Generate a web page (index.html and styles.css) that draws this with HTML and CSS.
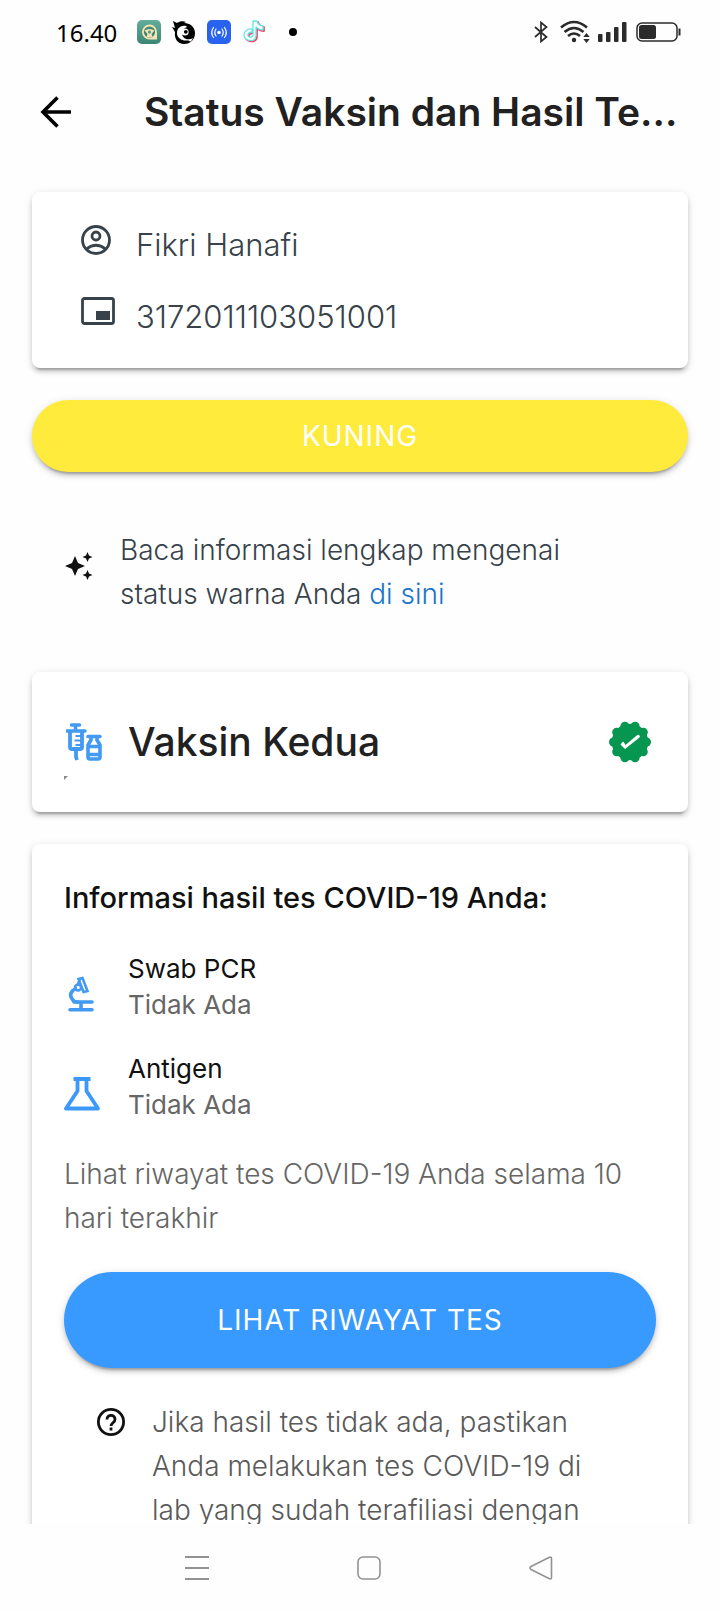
FILE: index.html
```html
<!DOCTYPE html>
<html lang="id">
<head>
<meta charset="utf-8">
<meta name="viewport" content="width=device-width, initial-scale=1">
<title>Status Vaksin dan Hasil Tes</title>
<link rel="stylesheet" href="styles.css">
</head>
<body>
<div class="statusbar">
  <span class="clock">16.40</span>
  <div class="notifications">
    <svg width="24" height="24" viewBox="0 0 24 24" aria-hidden="true">
      <defs><linearGradient id="g" x1="0" y1="0" x2="0" y2="1"><stop offset="0" stop-color="#62ad9c"/><stop offset="1" stop-color="#3b8573"/></linearGradient></defs>
      <rect width="24" height="24" rx="5" fill="url(#g)"/>
      <path d="M5 12a7.500 7.500 0 1 1 15 0v7.500h-7.500A7.500 7.500 0 0 1 5 12z" fill="#f3e2b4"/>
      <circle cx="12.500" cy="12" r="5.600" fill="#3f8674"/>
      <path d="M7.500 10.500q5-3 10 0l-3 3.500 1 3h-6l1-3z" fill="#f3e2b4"/>
      <circle cx="12.500" cy="12" r="1.500" fill="#4b9382"/>
    </svg>
    <svg width="24" height="24" viewBox="0 0 24 24" aria-hidden="true">
      <path d="M1 1l4 2c3-2 6-2 9-1l-2 1c6 0 11 4 11 10 0 6-4 11-11 11C6 24 2 19 3 12L0 7l3 1z" fill="#000"/>
      <path d="M14 6C9 5 5 8 5 13c0 6 7 9 12 7-4-1-7-3-7-7 0-3 2-5 5-6z" fill="#fff"/>
      <circle cx="13" cy="12" r="3.600" fill="#fff"/><circle cx="13.800" cy="11.800" r="1.900" fill="#000"/>
      <path d="M15 19q3 1 6-1l-2 3.500q-2 0-4-2.500z" fill="#fff"/>
    </svg>
    <svg width="24" height="24" viewBox="0 0 24 24" aria-hidden="true">
      <rect width="24" height="24" rx="5" fill="#2763ee"/>
      <circle cx="12" cy="12.500" r="1.800" fill="#fff"/>
      <path d="M9 9q-2.500 3.500 0 7M15 9q2.500 3.500 0 7M6.500 7.500q-3.600 5 0 10M17.500 7.500q3.600 5 0 10" fill="none" stroke="#fff" stroke-width="1.200" stroke-linecap="round"/>
    </svg>
    <svg width="24" height="24" viewBox="0 0 24 24" fill="none" stroke-linejoin="round" aria-hidden="true">
      <path d="M10 9C5 8 2 12 2 15c0 6 11 8 12 1V7c2 2 4 3 7 3V6c-3 0-5-2-6-5h-4v14c-1 4-6 2-5-1 1-2 3-2 4-2z" stroke="#f2496b" stroke-width="1.800" transform="translate(1 1)"/>
      <path d="M10 9C5 8 2 12 2 15c0 6 11 8 12 1V7c2 2 4 3 7 3V6c-3 0-5-2-6-5h-4v14c-1 4-6 2-5-1 1-2 3-2 4-2z" fill="#fff" stroke="#5fe6e8" stroke-width="1.300"/>
    </svg>
    <span class="dot"></span>
  </div>
  <div class="system">
    <svg class="bluetooth" width="14" height="22" viewBox="0 0 14 22" fill="none" stroke="#2b2b2b" stroke-width="1.700" aria-hidden="true"><path d="M1 6l11.500 10L7 20.500v-19L12.500 6 1 16"/></svg>
    <svg width="30" height="24" viewBox="0 0 30 24" aria-hidden="true">
      <g fill="none" stroke="#2b2b2b" stroke-width="2.600"><path d="M1 7.500q13-11 26 0"/><path d="M4.500 12q9.500-8 19 0"/><path d="M8 16q6-5 12 0"/></g>
      <circle cx="14" cy="20" r="2.200" fill="#2b2b2b"/><path d="M26.500 13l3.200 4h-6.400zM26.500 23l3.200-4h-6.400z" fill="#2b2b2b"/>
    </svg>
    <svg width="30" height="22" viewBox="0 0 30 22" fill="#2b2b2b" aria-hidden="true"><rect x="0" y="13" width="4.500" height="8" rx="1"/><rect x="8" y="11" width="4.500" height="10" rx="1"/><rect x="16" y="6" width="4.500" height="15" rx="1"/><rect x="24" y="1" width="4.500" height="20" rx="1"/></svg>
    <svg width="46" height="20" viewBox="0 0 46 20" aria-hidden="true"><rect x="1" y="1" width="40" height="18" rx="5" fill="none" stroke="#2b2b2b" stroke-width="1.500"/><rect x="3" y="3" width="17" height="14" rx="2.500" fill="#2b2b2b"/><path d="M43.500 6.500v7" stroke="#2b2b2b" stroke-width="2"/></svg>
  </div>
</div>

<header class="appbar">
  <button class="back" type="button" aria-label="Kembali">
    <svg width="32" height="32" viewBox="0 0 32 32" fill="none" stroke="#000" stroke-width="3.600" aria-hidden="true"><path d="M31 16H3M17.500 1.500L3 16l14.500 14.500"/></svg>
  </button>
  <h1 class="title">Status Vaksin dan Hasil Te...</h1>
</header>

<main class="content">
  <section class="card identity">
    <div class="identity-row">
      <svg width="34" height="30" viewBox="0 0 34 30" fill="none" stroke="#37424a" stroke-width="2.800" aria-hidden="true"><circle cx="15" cy="15" r="13.500"/><circle cx="15" cy="11" r="4"/><path d="M5.500 24q9.500-7.500 19 0"/></svg>
      <span>Fikri Hanafi</span>
    </div>
    <div class="identity-row">
      <svg width="34" height="30" viewBox="0 0 34 30" aria-hidden="true"><rect x="1.500" y="1.500" width="31" height="25" rx="2" fill="none" stroke="#37424a" stroke-width="2.800"/><path d="M15 14h14v9H15z" fill="#37424a"/></svg>
      <span>3172011103051001</span>
    </div>
  </section>

  <button class="pill yellow" type="button">KUNING</button>

  <div class="notice">
    <svg width="28" height="28" viewBox="0 0 28 28" fill="#111" aria-hidden="true"><path d="M10 4l3 7 7 3-7 3-3 7-3-7-7-3 7-3zM22.500 0l1.500 3.500L27.500 5 24 6.500 22.500 10 21 6.500 17.500 5 21 3.500zM22.500 18l1.500 3.500 3.500 1.500-3.500 1.500-1.500 3.500-1.500-3.500-3.500-1.500 3.500-1.500z"/></svg>
    <p>Baca informasi lengkap mengenai status warna Anda <a href="#info">di sini</a></p>
  </div>

  <section class="card vaccine">
    <svg width="36" height="38" viewBox="0 0 36 38" fill="none" stroke="#429af2" aria-hidden="true">
      <path d="M5.500 2h8M9.500 2v6M1 8h18" stroke-width="3.600" stroke-linecap="round"/>
      <path d="M4 8v16q0 2 2 2h8q2 0 2-2V8" stroke-width="3.800"/>
      <path d="M9.500 13H15M8.500 17.500H15M9.500 22H15" stroke-width="2.200"/><path d="M10 26v8l1 3" stroke-width="3.800"/>
      <path d="M22 13.500h12" stroke-width="3.400" stroke-linecap="round"/>
      <path d="M25 14v3l-3 5v12q0 2 2 2h8q2 0 2-2V22l-3-5v-3" stroke-width="3.600"/><path d="M22 23.500h12M22 31.500h12" stroke-width="3.400"/><path d="M26 27.500h5" stroke="#fff" stroke-width="3"/>
    </svg>
    <h2>Vaksin Kedua</h2>
    <svg width="42" height="42" viewBox="-21 -21 42 42" role="img" aria-label="Terverifikasi">
      <g fill="#07964f"><circle r="18.300"/><circle cx="16.500" cy="0" r="4.500"/><circle cx="-16.500" cy="0" r="4.500"/><circle cx="13.300" cy="9.700" r="4.500"/><circle cx="5.100" cy="15.700" r="4.500"/><circle cx="-5.100" cy="15.700" r="4.500"/><circle cx="-13.300" cy="9.700" r="4.500"/><circle cx="-13.300" cy="-9.700" r="4.500"/><circle cx="-5.100" cy="-15.700" r="4.500"/><circle cx="5.100" cy="-15.700" r="4.500"/><circle cx="13.300" cy="-9.700" r="4.500"/></g>
      <path d="M-9.500 2.500L-7.500 0q.8-.6 1.500.4l1.500 2.600L7-6.800q1.500-1 2.500.3 1 1.200-.3 2.300L-5 7z" fill="#fff"/>
    </svg>
    <svg class="mark" width="4" height="4" viewBox="0 0 4 4" aria-hidden="true"><path d="M0 0h4L0 4z" fill="#888"/></svg>
  </section>

  <section class="card results">
    <h3>Informasi hasil tes COVID-19 Anda:</h3>
    <dl class="tests">
      <div class="test">
        <svg width="36" height="36" viewBox="0 0 36 36" fill="none" stroke="#429af2" stroke-linecap="round" aria-hidden="true">
          <path d="M6 33.800h22M10 26h18M17 27v7" stroke-width="3.600"/>
          <path d="M11.500 12.500Q4.500 17 7.500 22q2 4 6 4" stroke-width="3.600"/>
          <circle cx="14" cy="11.500" r="3" stroke-width="2.400"/>
          <path d="M14.500 3l4-1 5 13-4 1zM14 8l2-5" stroke-width="2.600"/>
        </svg>
        <dt>Swab PCR</dt>
        <dd>Tidak Ada</dd>
      </div>
      <div class="test">
        <svg width="36" height="36" viewBox="0 0 36 36" fill="none" stroke="#3b99fc" stroke-width="3.800" stroke-linejoin="round" aria-hidden="true"><path d="M9.500 3h17M13.500 4v11L2 32.500h32L22.500 15V4"/></svg>
        <dt>Antigen</dt>
        <dd>Tidak Ada</dd>
      </div>
    </dl>
    <p class="history">Lihat riwayat tes COVID-19 Anda selama 10 hari terakhir</p>
    <button class="pill blue" type="button">LIHAT RIWAYAT TES</button>
    <div class="help">
      <svg width="28" height="28" viewBox="0 0 28 28" fill="none" stroke="#111" stroke-width="2.800" aria-hidden="true"><circle cx="14" cy="14" r="12.600"/><path d="M10 11.500c0-5.500 8-5.500 8 0 0 3-4 3.500-4 6.500M14 19.500v3"/></svg>
      <p>Jika hasil tes tidak ada, pastikan Anda melakukan tes COVID-19 di lab yang sudah terafiliasi dengan</p>
    </div>
  </section>
</main>

<nav class="navbar" aria-label="Navigasi sistem">
  <button type="button" aria-label="Aplikasi terbaru"><svg width="24" height="24" viewBox="0 0 24 24" stroke="#929292" stroke-width="2" aria-hidden="true"><path d="M0 1h24M0 12h24M0 23h24"/></svg></button>
  <button type="button" aria-label="Beranda"><svg width="24" height="24" viewBox="0 0 24 24" fill="none" stroke="#929292" stroke-width="1.600" aria-hidden="true"><rect x="1" y="1" width="22" height="22" rx="5"/></svg></button>
  <button type="button" aria-label="Kembali"><svg width="24" height="24" viewBox="0 0 24 24" fill="none" stroke="#929292" stroke-width="1.600" stroke-linejoin="round" aria-hidden="true"><path d="M2 10.500L20 1.500q2.500-1 2.500 1v19q0 2-2.500 1L2 13.500q-2-1.500 0-3z"/></svg></button>
</nav>
</body>
</html>
```

FILE: styles.css
```css
* { box-sizing: border-box; }

body {
  display: flex;
  flex-direction: column;
  height: 100vh;
  margin: 0;
  background: #fefefe;
  color: #212121;
  font-family: Inter, "Liberation Sans", sans-serif;
  font-size: 28px;
  font-weight: 300;
}

h1, h2, h3, p, dl, dd { margin: 0; }
button { border: 0; padding: 0; background: none; font-family: inherit; cursor: pointer; }
svg { display: block; flex: none; }

.statusbar {
  display: flex;
  flex: none;
  align-items: center;
  height: 64px;
  padding: 0 38px 0 56px;
}
.clock { color: #000; font: 400 24px "Noto Sans", sans-serif; }
.notifications { display: flex; align-items: center; gap: 11px; margin-left: 20px; }
.dot { width: 8px; height: 8px; margin-left: 12px; border-radius: 50%; background: #000; }
.system { display: flex; align-items: center; gap: 8px; margin-left: auto; }
.bluetooth { margin-right: 4px; }

.appbar {
  display: flex;
  flex: none;
  align-items: center;
  gap: 72px;
  height: 96px;
  padding: 0 40px;
}
.title { font-size: 39px; font-weight: 600; line-height: 56px; white-space: nowrap; }

.content {
  display: flex;
  flex: 1;
  flex-direction: column;
  min-height: 0;
  overflow-y: auto;
  padding: 32px 32px 0;
  scrollbar-width: none;
}
.card, .pill { box-shadow: 0 6px 2px -4px #0003, 0 4px 4px #00000024, 0 2px 10px #0000001f; }
.card { flex: none; border-radius: 8px; background: #fff; }

.identity {
  display: flex;
  flex-direction: column;
  gap: 28px;
  padding: 31px 49px 29px;
  color: #37424a;
  font-size: 31px;
  line-height: 44px;
}
.identity-row { display: flex; gap: 21px; }
.identity-row svg { margin-top: 2px; }

.pill {
  flex: none;
  border-radius: 48px;
  color: #fff;
  font-size: 28px;
  font-weight: 400;
  letter-spacing: 1px;
}
.yellow { margin-top: 32px; padding: 14px 32px; background: #ffeb3b; line-height: 44px; }
.blue { width: 100%; margin-top: 32px; padding: 26px 32px; background: #3899ff; line-height: 44px; }

.notice {
  display: flex;
  align-items: center;
  gap: 27px;
  padding: 56px 96px 56px 33px;
  color: #37424a;
  line-height: 44px;
}
.notice svg { margin-bottom: 12px; }
.notice a { color: #1976c8; text-decoration: none; }

.vaccine {
  display: grid;
  grid-template-columns: 36px 1fr 42px;
  align-items: center;
  column-gap: 26px;
  padding: 42px 37px 32px 34px;
}
.vaccine h2 { font-size: 39px; font-weight: 500; line-height: 56px; }
.mark { margin: 6px 0 0 -2px; }

.results { flex: 1 0 auto; margin-top: 32px; padding: 32px 32px 0; border-radius: 8px 8px 0 0; }
.results h3 { color: #111; font-size: 29px; font-weight: 500; line-height: 44px; }
.tests { display: grid; gap: 28px; margin-top: 31px; }
.test { display: grid; grid-template-columns: 36px 1fr; column-gap: 28px; font-size: 26px; line-height: 36px; }
.test svg { grid-row: 1 / 3; align-self: end; margin-bottom: 11px; }
.test dt { color: #111; font-weight: 400; }
.test dd { grid-column: 2; color: #666; font-weight: 400; }
.history { margin-top: 29px; color: #666; line-height: 44px; }
.help { display: flex; gap: 27px; margin-top: 32px; padding: 0 32px 0 33px; color: #5a5a5a; line-height: 44px; }
.help svg { margin-top: 8px; }

.navbar {
  display: flex;
  flex: none;
  align-items: center;
  justify-content: center;
  gap: 148px;
  height: 88px;
  padding-left: 18px;
  background: #fefefe;
}
```
